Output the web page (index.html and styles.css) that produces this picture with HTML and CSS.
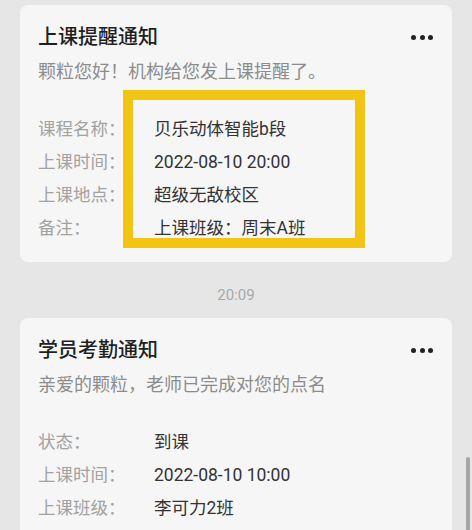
FILE: index.html
```html
<!DOCTYPE html>
<html lang="zh-CN">
<head>
<meta charset="utf-8">
<link rel="stylesheet" href="styles.css">
</head>
<body>
<div class="feed">
  <div class="card">
    <div class="card-head">
      <div class="title">上课提醒通知</div>
      <div class="more"><span></span><span></span><span></span></div>
    </div>
    <div class="desc">颗粒您好！机构给您发上课提醒了。</div>
    <div class="fields">
      <div class="label">课程名称：</div><div class="value">贝乐动体智能b段</div>
      <div class="label">上课时间：</div><div class="value">2022-08-10 20:00</div>
      <div class="label">上课地点：</div><div class="value">超级无敌校区</div>
      <div class="label">备注：</div><div class="value">上课班级：周末A班</div>
    </div>
    <div class="highlight"></div>
  </div>
  <div class="time">20:09</div>
  <div class="card">
    <div class="card-head">
      <div class="title">学员考勤通知</div>
      <div class="more"><span></span><span></span><span></span></div>
    </div>
    <div class="desc">亲爱的颗粒，老师已完成对您的点名</div>
    <div class="fields">
      <div class="label">状态：</div><div class="value">到课</div>
      <div class="label">上课时间：</div><div class="value">2022-08-10 10:00</div>
      <div class="label">上课班级：</div><div class="value">李可力2班</div>
    </div>
  </div>
</div>
<div class="scrollbar"></div>
</body>
</html>
```
FILE: styles.css
```css
html, body {
  margin: 0;
  padding: 0;
  height: 100%;
  overflow: hidden;
}
body {
  background: #e6e6e6;
  font-family: Roboto, "Noto Sans CJK SC", "Noto Sans", sans-serif;
  position: relative;
}
.feed {
  padding: 5px 20px 0 20px;
}
.card {
  position: relative;
  background: #f6f6f6;
  border-radius: 8px;
  padding: 18px 19px 17px 18px;
}
.card-head {
  display: flex;
  align-items: center;
  justify-content: space-between;
}
.title {
  font-size: 20px;
  line-height: 28px;
  font-weight: 500;
  color: #1f1f1f;
}
.more {
  display: flex;
  gap: 3.5px;
}
.more span {
  width: 5px;
  height: 5px;
  border-radius: 50%;
  background: #222;
}
.desc {
  margin-top: 9px;
  font-size: 18px;
  line-height: 24px;
  color: #8c8c8c;
}
.fields {
  margin-top: 29px;
  display: grid;
  grid-template-columns: 116px 1fr;
  font-size: 17.5px;
  line-height: 33px;
}
.label {
  color: #a2a2a2;
}
.value {
  color: #333;
}
.highlight {
  position: absolute;
  left: 103px;
  top: 85px;
  width: 222px;
  height: 138px;
  border: 10px solid #f2c514;
}
.time {
  padding: 24px 0 14px;
  line-height: 18px;
  font-size: 15px;
  text-align: center;
  color: #a8a8a8;
}
.scrollbar {
  position: absolute;
  left: 466px;
  top: 457px;
  width: 4px;
  height: 80px;
  background: #a6a6a6;
  border-radius: 2px;
}
```
